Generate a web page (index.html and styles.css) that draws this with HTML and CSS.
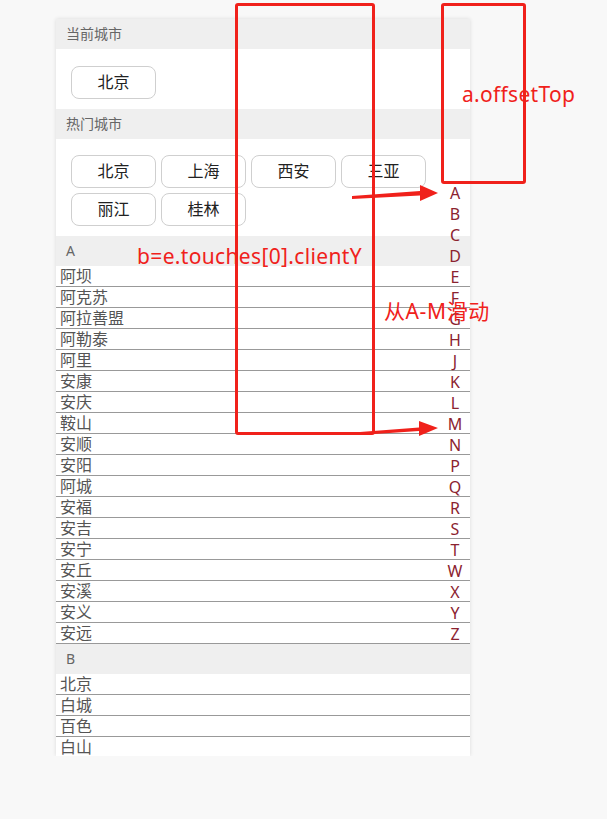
FILE: index.html
```html
<!DOCTYPE html>
<html lang="zh">
<head>
    <meta charset="UTF-8">
    <meta name="viewport" content="width=device-width, initial-scale=1.0">
    <title>城市选择</title>
    <link rel="stylesheet" href="styles.css">
</head>
<body>
    <div class="city-page">
        <div class="section-title">当前城市</div>
        <div class="btn-box">
            <span class="city-btn">北京</span>
        </div>
        <div class="section-title">热门城市</div>
        <div class="btn-box">
            <span class="city-btn">北京</span>
            <span class="city-btn">上海</span>
            <span class="city-btn">西安</span>
            <span class="city-btn">三亚</span>
            <span class="city-btn">丽江</span>
            <span class="city-btn">桂林</span>
        </div>

        <div class="section-title letter">A</div>
        <ul class="city-list">
            <li>阿坝</li>
            <li>阿克苏</li>
            <li>阿拉善盟</li>
            <li>阿勒泰</li>
            <li>阿里</li>
            <li>安康</li>
            <li>安庆</li>
            <li>鞍山</li>
            <li>安顺</li>
            <li>安阳</li>
            <li>阿城</li>
            <li>安福</li>
            <li>安吉</li>
            <li>安宁</li>
            <li>安丘</li>
            <li>安溪</li>
            <li>安义</li>
            <li>安远</li>
        </ul>
        <div class="section-title letter">B</div>
        <ul class="city-list">
            <li>北京</li>
            <li>白城</li>
            <li>百色</li>
            <li>白山</li>
        </ul>

        <!-- 右侧字母索引 -->
        <ul class="letter-index">
            <li>A</li><li>B</li><li>C</li><li>D</li><li>E</li><li>F</li>
            <li>G</li><li>H</li><li>J</li><li>K</li><li>L</li><li>M</li>
            <li>N</li><li>P</li><li>Q</li><li>R</li><li>S</li><li>T</li>
            <li>W</li><li>X</li><li>Y</li><li>Z</li>
        </ul>
    </div>

    <!-- 标注 -->
    <div class="mark-box box-touch"></div>
    <div class="mark-box box-offset"></div>
    <div class="mark-text text-offset">a.offsetTop</div>
    <div class="mark-text text-touch">b=e.touches[0].clientY</div>
    <div class="mark-text text-slide">从A-M滑动</div>
    <svg class="mark-arrows" width="607" height="819" viewBox="0 0 607 819">
        <polygon points="352,196 420,191 420,185 438,193 420,201 420,195.5 352,199" fill="#f0211b"/>
        <polygon points="360,432 419,427.5 419,421 438,428 419,436 419,431 360,435" fill="#f0211b"/>
    </svg>
</body>
</html>
```

FILE: styles.css
```css
body {
    margin: 0;
    background-color: #f8f8f8;
    font-family: "Noto Sans", "Noto Sans CJK SC", sans-serif;
}
.city-page {
    position: relative;
    width: 414px;
    height: 737px;
    margin: 19px 0 0 56px;
    overflow: hidden;
    background-color: #fff;
    box-shadow: 0 0 4px rgba(0,0,0,0.12);
}
.section-title {
    height: 30px;
    line-height: 30px;
    padding-left: 10px;
    font-size: 14px;
    color: #666;
    background-color: #efefef;
}
.btn-box {
    display: flex;
    flex-wrap: wrap;
    gap: 5px;
    padding: 17px 15px 10px;
}
.btn-box + .section-title + .btn-box {
    padding-top: 16px;
}
.city-btn {
    box-sizing: border-box;
    width: 85px;
    height: 33px;
    line-height: 31px;
    text-align: center;
    font-size: 16px;
    color: #222;
    border: 1px solid #cfcfcf;
    border-radius: 8px;
}
.city-list {
    list-style: none;
    margin: 0;
    padding: 0;
}
.city-list li {
    height: 20px;
    line-height: 21px;
    padding-left: 4px;
    font-size: 16px;
    color: #555;
    border-bottom: 1px solid #999;
}
.letter-index {
    position: absolute;
    top: 164px;
    right: 5px;
    width: 20px;
    margin: 0;
    padding: 0;
    list-style: none;
    text-align: center;
}
.letter-index li {
    height: 21px;
    line-height: 21px;
    font-size: 16px;
    color: #8b2330;
}
.mark-box {
    position: absolute;
    box-sizing: border-box;
    border: 3px solid #f0211b;
    border-radius: 3px;
}
.box-touch {
    left: 235px;
    top: 3px;
    width: 140px;
    height: 432px;
}
.box-offset {
    left: 441px;
    top: 3px;
    width: 85px;
    height: 181px;
}
.mark-text {
    position: absolute;
    color: #f0211b;
    font-size: 21px;
    line-height: 26px;
    letter-spacing: 0.35px;
    white-space: nowrap;
}
.text-offset {
    left: 462px;
    top: 81px;
    font-size: 21px;
    letter-spacing: 0.3px;
}
.text-touch {
    left: 137px;
    top: 243px;
}
.text-slide {
    left: 384px;
    top: 298px;
    letter-spacing: 0.6px;
}
.mark-arrows {
    position: absolute;
    left: 0;
    top: 0;
    pointer-events: none;
}
```
